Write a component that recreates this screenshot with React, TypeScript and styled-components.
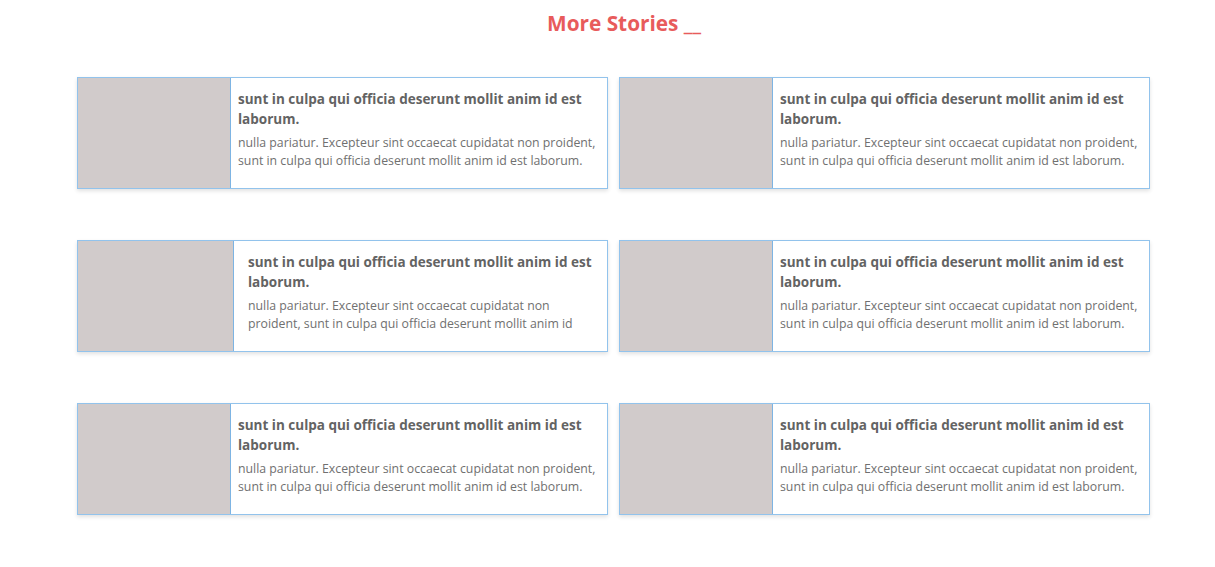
import React from "react"
import styled, { createGlobalStyle } from "styled-components"

const GlobalStyle = createGlobalStyle`
  html, body {
    margin: 0;
    padding: 0;
    background: #ffffff;
    font-family: "Open Sans", "Noto Sans", sans-serif;
  }
`

const Page = styled.div`
  padding: 9px 65px 40px 77px;
`

const Heading = styled.h2`
  margin: 0 0 40px 0;
  padding-left: 21px;
  text-align: center;
  font-size: 20.8px;
  line-height: 28px;
  font-weight: 700;
  color: #e85b5b;
`

const Grid = styled.div`
  display: grid;
  grid-template-columns: 531px 531px;
  column-gap: 11px;
  row-gap: 51px;
`

const Card = styled.div`
  display: flex;
  height: 112px;
  box-sizing: border-box;
  border: 1px solid #92c3ec;
  background: #ffffff;
  box-shadow: 0 2px 4px rgba(0, 0, 0, 0.12);
  overflow: hidden;
`

const Thumb = styled.div<{ $wide?: boolean }>`
  flex: 0 0 ${(p) => (p.$wide ? 155 : 152)}px;
  background: #d1cbcb;
  border-right: 1px solid #7db4e3;
`

const Body = styled.div<{ $wide?: boolean }>`
  flex: 1;
  min-width: 0;
  padding: ${(p) => (p.$wide ? "11px 8px 0 14px" : "11px 6px 0 7px")};
  color: #6b6b6b;
`

const Title = styled.div`
  font-size: 13.5px;
  line-height: 20px;
  font-weight: 700;
  color: #636363;
  margin-bottom: 5px;
`

const Excerpt = styled.p<{ $wide?: boolean }>`
  margin: 0;
  padding-right: ${(p) => (p.$wide ? 20 : 0)}px;
  font-size: 12.3px;
  line-height: 18px;
  color: #707070;
  max-height: 36px;
  overflow: hidden;
`

const stories = [
  { id: 1 },
  { id: 2 },
  { id: 3, wide: true },
  { id: 4 },
  { id: 5 },
  { id: 6 },
]

export default function App() {
  return (
    <Page>
      <GlobalStyle />
      <Heading>More Stories __</Heading>
      <Grid>
        {stories.map((s) => (
          <Card key={s.id}>
            <Thumb $wide={s.wide} />
            <Body $wide={s.wide}>
              <Title>sunt in culpa qui officia deserunt mollit anim id est laborum.</Title>
              <Excerpt $wide={s.wide}>
                nulla pariatur. Excepteur sint occaecat cupidatat non proident, sunt in culpa
                qui officia deserunt mollit anim id est laborum.
              </Excerpt>
            </Body>
          </Card>
        ))}
      </Grid>
    </Page>
  )
}
